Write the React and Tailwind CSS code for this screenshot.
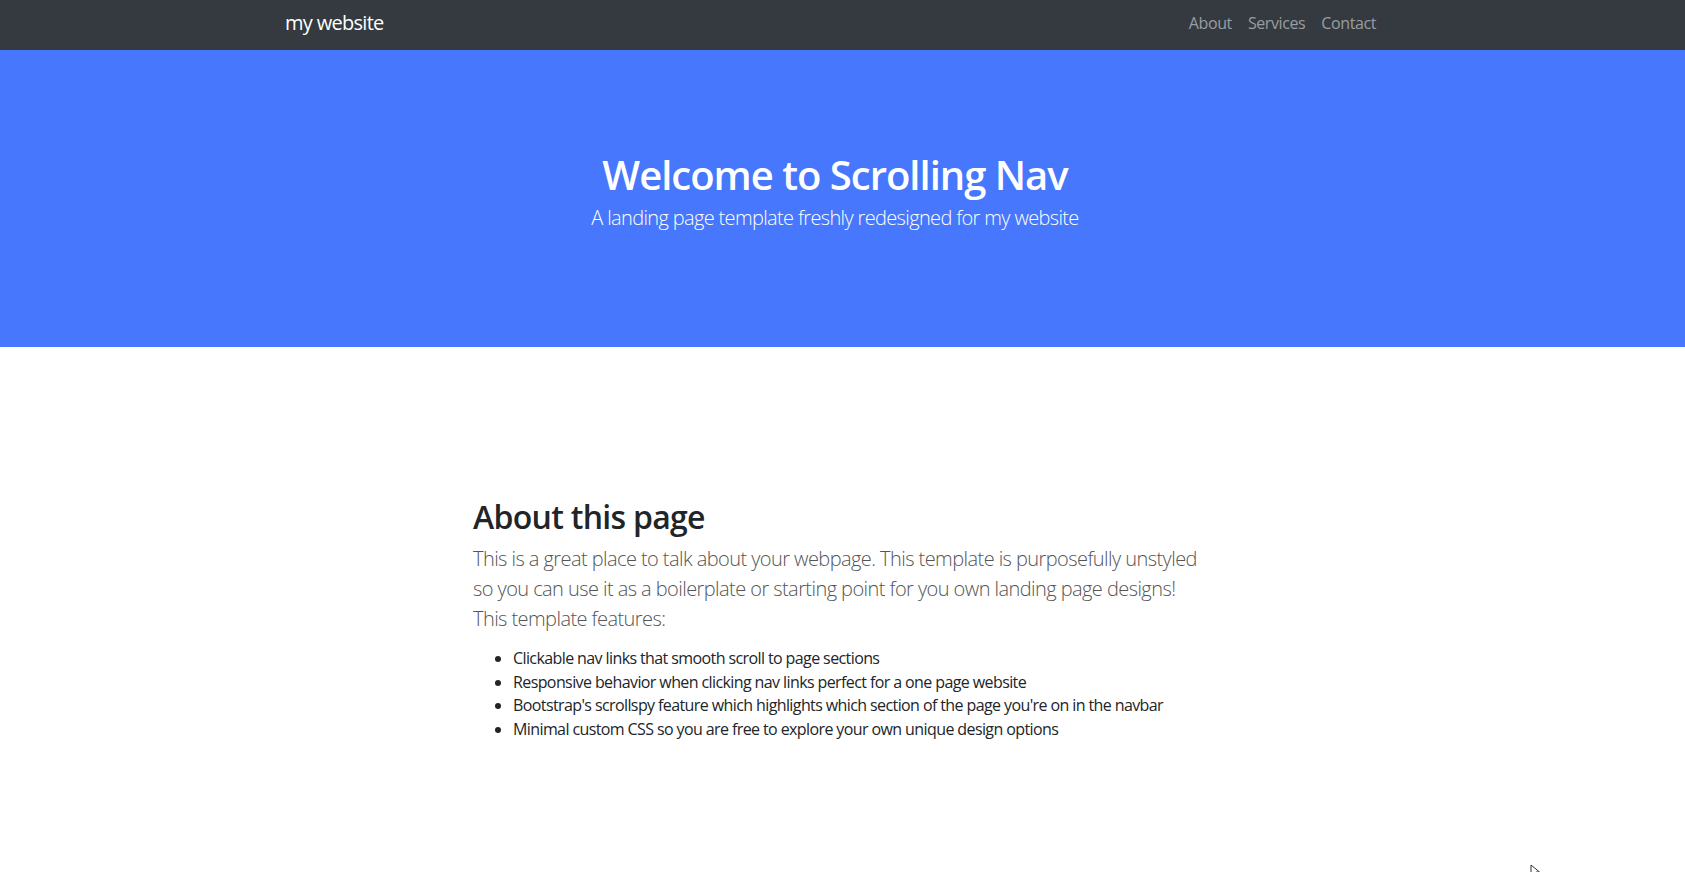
export default function App() {
  const font = { fontFamily: '"Open Sans", "Noto Sans", sans-serif' };
  return (
    <div className="relative min-h-[872px] bg-white overflow-hidden" style={font}>
      <nav className="h-[50px] bg-[#343a40] flex items-center justify-between pl-[285px] pr-[309px] pb-[4px]">
        <span className="text-[20px] leading-[30px] text-white tracking-[-0.7px]">my website</span>
        <div className="flex gap-[16px] text-[16px] leading-[24px] text-[#9a9da0] tracking-[-0.4px]">
          <span>About</span>
          <span>Services</span>
          <span>Contact</span>
        </div>
      </nav>
      <header className="h-[297px] bg-[#4677fc] flex flex-col items-center pt-[101px] pr-[15px] text-white">
        <h1 className="text-[40px] leading-[48px] font-semibold tracking-[-1px]">Welcome to Scrolling Nav</h1>
        <p className="mt-[4px] text-[20px] leading-[30px] font-light tracking-[-0.65px]">A landing page template freshly redesigned for my website</p>
      </header>
      <section className="pt-[151px] pl-[473px]">
        <div className="w-[760px]">
          <h2 className="text-[32px] leading-[38px] font-semibold text-[#212529] mb-[8px] tracking-[-0.7px]">About this page</h2>
          <p className="text-[20px] leading-[30px] font-light text-[#555] mb-[13px] tracking-[-0.57px]">
            This is a great place to talk about your webpage. This template is purposefully unstyled<br />
            so you can use it as a boilerplate or starting point for you own landing page designs!<br />
            This template features:
          </p>
          <ul className="list-disc pl-[40px] text-[16px] leading-[23.7px] text-[#212529] tracking-[-0.6px]">
            <li>Clickable nav links that smooth scroll to page sections</li>
            <li>Responsive behavior when clicking nav links perfect for a one page website</li>
            <li>Bootstrap's scrollspy feature which highlights which section of the page you're on in the navbar</li>
            <li>Minimal custom CSS so you are free to explore your own unique design options</li>
          </ul>
        </div>
      </section>
      <svg className="absolute left-[1530px] top-[864px]" width="10" height="14" viewBox="0 0 10 14">
        <path d="M1 1 L1 12 L4 9 L6 13 L8 12 L6 8 L9.5 8 Z" fill="white" stroke="#333" strokeWidth="1" />
      </svg>
    </div>
  );
}
